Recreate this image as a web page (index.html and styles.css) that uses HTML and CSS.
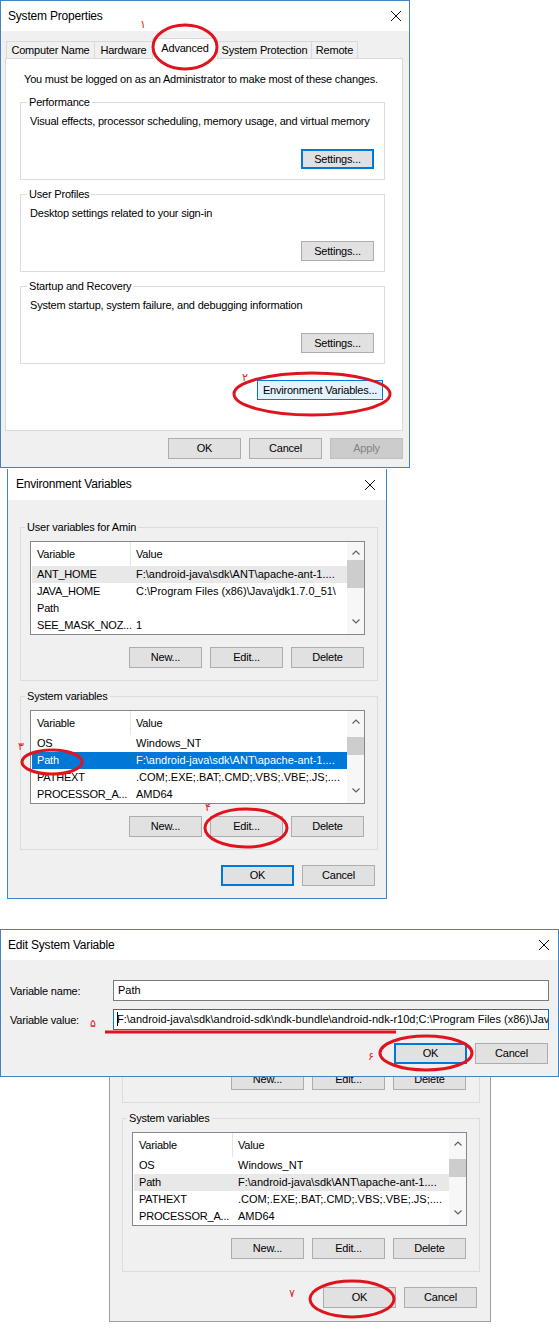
FILE: index.html
```html
<!DOCTYPE html>
<html>
<head>
<meta charset="utf-8">
<title>Environment Variables steps</title>
<link rel="stylesheet" href="styles.css">
</head>
<body>
<main class="desk">

  <!-- Window 1: System Properties -->
  <section class="win sysprops">
    <header class="titlebar tb-sp">
      <span class="title">System Properties</span>
      <svg class="close" viewBox="0 0 12 12"><path d="M1 1L11 11M11 1L1 11"/></svg>
    </header>
    <div class="sp-body">
      <nav class="tabs">
        <span class="tab t-cn">Computer Name</span>
        <span class="tab t-hw">Hardware</span>
        <span class="tab t-adv active">Advanced</span>
        <span class="tab t-sp">System Protection</span>
        <span class="tab t-rm">Remote</span>
      </nav>
      <div class="panel">
        <p class="notice">You must be logged on as an Administrator to make most of these changes.</p>
        <div class="group sp-group first">
          <span class="gtitle">Performance</span>
          <p class="gtext">Visual effects, processor scheduling, memory usage, and virtual memory</p>
          <div class="grp-btns"><button class="btn focus">Settings...</button></div>
        </div>
        <div class="group sp-group">
          <span class="gtitle">User Profiles</span>
          <p class="gtext">Desktop settings related to your sign-in</p>
          <div class="grp-btns"><button class="btn">Settings...</button></div>
        </div>
        <div class="group sp-group">
          <span class="gtitle">Startup and Recovery</span>
          <p class="gtext">System startup, system failure, and debugging information</p>
          <div class="grp-btns"><button class="btn">Settings...</button></div>
        </div>
        <div class="env-row"><button class="btn hover wide">Environment Variables...</button></div>
      </div>
      <div class="sp-foot">
        <button class="btn tall">OK</button>
        <button class="btn tall">Cancel</button>
        <button class="btn tall disabled">Apply</button>
      </div>
    </div>
  </section>

  <!-- Window 2: Environment Variables -->
  <section class="win envvars ev-a">
    <header class="titlebar tb-ev">
      <span class="title">Environment Variables</span>
      <svg class="close" viewBox="0 0 12 12"><path d="M1 1L11 11M11 1L1 11"/></svg>
    </header>
    <div class="ev-body">
      <div class="group ev-group">
        <span class="gtitle">User variables for Amin</span>
        <div class="list">
          <div class="list-main">
            <div class="lhead"><span class="c1">Variable</span><span class="c2">Value</span></div>
            <div class="row sel-gray"><span class="c1">ANT_HOME</span><span class="c2">F:\android-java\sdk\ANT\apache-ant-1....</span></div>
            <div class="row"><span class="c1">JAVA_HOME</span><span class="c2">C:\Program Files (x86)\Java\jdk1.7.0_51\</span></div>
            <div class="row"><span class="c1">Path</span><span class="c2"></span></div>
            <div class="row"><span class="c1">SEE_MASK_NOZ...</span><span class="c2">1</span></div>
          </div>
          <div class="vscroll">
            <div class="arrow up"><svg viewBox="0 0 8 5"><path d="M0.5 4.5L4 1L7.5 4.5"/></svg></div>
            <div class="track"><div class="thumb thumb-user"></div></div>
            <div class="arrow down"><svg viewBox="0 0 8 5"><path d="M0.5 0.5L4 4L7.5 0.5"/></svg></div>
          </div>
        </div>
        <div class="list-btns"><button class="btn tall">New...</button><button class="btn tall">Edit...</button><button class="btn tall">Delete</button></div>
      </div>
      <div class="group ev-group second">
        <span class="gtitle">System variables</span>
        <div class="list">
          <div class="list-main">
            <div class="lhead"><span class="c1">Variable</span><span class="c2">Value</span></div>
            <div class="row"><span class="c1">OS</span><span class="c2">Windows_NT</span></div>
            <div class="row sel-blue"><span class="c1">Path</span><span class="c2">F:\android-java\sdk\ANT\apache-ant-1....</span></div>
            <div class="row"><span class="c1">PATHEXT</span><span class="c2">.COM;.EXE;.BAT;.CMD;.VBS;.VBE;.JS;....</span></div>
            <div class="row"><span class="c1">PROCESSOR_A...</span><span class="c2">AMD64</span></div>
          </div>
          <div class="vscroll">
            <div class="arrow up"><svg viewBox="0 0 8 5"><path d="M0.5 4.5L4 1L7.5 4.5"/></svg></div>
            <div class="track"><div class="thumb thumb-sys"></div></div>
            <div class="arrow down"><svg viewBox="0 0 8 5"><path d="M0.5 0.5L4 4L7.5 0.5"/></svg></div>
          </div>
        </div>
        <div class="list-btns"><button class="btn tall">New...</button><button class="btn tall">Edit...</button><button class="btn tall">Delete</button></div>
      </div>
      <div class="ev-foot"><button class="btn tall focus">OK</button><button class="btn tall">Cancel</button></div>
    </div>
  </section>

  <!-- Window 4: lower part of Environment Variables, behind the edit dialog -->
  <div class="clip">
    <section class="win envvars ev-b">
      <div class="ev-body">
        <div class="group ev-group cut">
          <div class="list-btns"><button class="btn tall">New...</button><button class="btn tall">Edit...</button><button class="btn tall">Delete</button></div>
        </div>
        <div class="group ev-group second">
          <span class="gtitle">System variables</span>
          <div class="list">
            <div class="list-main">
              <div class="lhead"><span class="c1">Variable</span><span class="c2">Value</span></div>
              <div class="row"><span class="c1">OS</span><span class="c2">Windows_NT</span></div>
              <div class="row sel-gray"><span class="c1">Path</span><span class="c2">F:\android-java\sdk\ANT\apache-ant-1....</span></div>
              <div class="row"><span class="c1">PATHEXT</span><span class="c2">.COM;.EXE;.BAT;.CMD;.VBS;.VBE;.JS;....</span></div>
              <div class="row"><span class="c1">PROCESSOR_A...</span><span class="c2">AMD64</span></div>
            </div>
            <div class="vscroll">
              <div class="arrow up"><svg viewBox="0 0 8 5"><path d="M0.5 4.5L4 1L7.5 4.5"/></svg></div>
              <div class="track"><div class="thumb thumb-sys"></div></div>
              <div class="arrow down"><svg viewBox="0 0 8 5"><path d="M0.5 0.5L4 4L7.5 0.5"/></svg></div>
            </div>
          </div>
          <div class="list-btns"><button class="btn tall">New...</button><button class="btn tall">Edit...</button><button class="btn tall">Delete</button></div>
        </div>
        <div class="ev-foot"><button class="btn tall">OK</button><button class="btn tall">Cancel</button></div>
      </div>
    </section>
  </div>

  <!-- Window 3: Edit System Variable -->
  <section class="win editvar">
    <header class="titlebar tb-ed">
      <span class="title">Edit System Variable</span>
      <svg class="close" viewBox="0 0 12 12"><path d="M1 1L11 11M11 1L1 11"/></svg>
    </header>
    <div class="ed-body">
      <div class="field"><span class="flabel">Variable name:</span><div class="input">Path</div></div>
      <div class="field second"><span class="flabel">Variable value:</span><div class="input focus"><span class="caret"></span>F:\android-java\sdk\android-sdk\ndk-bundle\android-ndk-r10d;C:\Program Files (x86)\Java</div></div>
      <div class="ed-foot"><button class="btn tall focus">OK</button><button class="btn tall">Cancel</button></div>
    </div>
  </section>

  <!-- Red hand-drawn annotations -->
  <svg class="marks" viewBox="0 0 559 1335">
    <g class="rings">
      <ellipse cx="185" cy="47" rx="32" ry="22"/>
      <ellipse cx="312" cy="394" rx="78" ry="21"/>
      <ellipse cx="52" cy="762" rx="30" ry="12"/>
      <ellipse cx="246" cy="828" rx="41" ry="19"/>
      <ellipse cx="426" cy="1053" rx="46" ry="17"/>
      <ellipse cx="352" cy="1299" rx="42" ry="18"/>
      <line x1="105" y1="1032" x2="396" y2="1032"/>
    </g>
    <g class="nums">
      <text x="140" y="28">۱</text>
      <text x="242" y="381">۲</text>
      <text x="18" y="750">۳</text>
      <text x="205" y="811">۴</text>
      <text x="90" y="1027">۵</text>
      <text x="368" y="1060">۶</text>
      <text x="289" y="1297">۷</text>
    </g>
  </svg>

</main>
</body>
</html>
```

FILE: styles.css
```css
* { box-sizing: border-box; }

html, body {
  margin: 0;
  padding: 0;
  background: #ffffff;
}

body {
  font-family: "Liberation Sans", Arial, sans-serif;
  font-size: 11px;
  letter-spacing: -0.2px;
  color: #000;
}

.desk {
  position: relative;
  width: 559px;
  height: 1335px;
  overflow: hidden;
  background: #fff;
}

/* ---------- windows ---------- */
.win {
  position: absolute;
  background: #f0f0f0;
  border: 1px solid #3f84c6;
}

.titlebar {
  display: flex;
  align-items: center;
  justify-content: space-between;
  background: #fff;
}

.title {
  line-height: 15px;
  font-size: 12px;
}

.close {
  width: 12px;
  height: 12px;
}
.close path {
  stroke: #111;
  stroke-width: 1;
  fill: none;
}

/* ---------- buttons ---------- */
.btn {
  font: inherit;
  letter-spacing: inherit;
  color: #000;
  width: 73px;
  height: 20px;
  padding: 0;
  margin: 0;
  background: #e1e1e1;
  border: 1px solid #adadad;
  text-align: center;
  line-height: 17px;
  white-space: nowrap;
}
.btn.tall { height: 21px; }
.btn.focus {
  border-color: #0078d7;
  box-shadow: inset 0 0 0 1px #0078d7;
}
.btn.hover {
  background: #e5f1fb;
  border-color: #0078d7;
}
.btn.wide { width: 126px; }
.btn.disabled {
  background: #cccccc;
  border-color: #bfbfbf;
  color: #838383;
}

/* ---------- group boxes ---------- */
.group {
  border: 1px solid #dcdcdc;
}
.gtitle {
  display: table;
  line-height: 15px;
  padding: 0 2px;
  margin-top: -8px;
}

/* ---------- System Properties ---------- */
.sysprops {
  left: 0;
  top: 0;
  width: 410px;
  height: 468px;
}
.tb-sp {
  height: 30px;
  padding: 0 7px 0 7px;
}
.sp-body {
  padding: 0 6px 0 4px;
}
.tabs {
  display: flex;
  align-items: flex-end;
  height: 27px;
  padding-left: 1px;
}
.tab {
  height: 17px;
  line-height: 16px;
  text-align: center;
  white-space: nowrap;
  background: #f0f0f0;
  border: 1px solid #d9d9d9;
  border-bottom: none;
  margin-left: -1px;
}
.tab:first-child { margin-left: 0; }
.tab.active {
  position: relative;
  z-index: 1;
  height: 21px;
  line-height: 19px;
  margin-bottom: -1px;
  background: #fff;
}
.t-cn { width: 89px; }
.t-hw { width: 59px; }
.t-adv { width: 66px; }
.t-sp { width: 95px; }
.t-rm { width: 47px; }

.panel {
  background: #fff;
  border: 1px solid #d9d9d9;
  height: 373px;
  padding: 13px 17px 0 14px;
}
.notice {
  margin: 0 0 0 4px;
  line-height: 15px;
  white-space: nowrap;
}
.sp-group {
  margin-top: 14px;
  padding: 0 10px 10px 9px;
}
.sp-group.first { margin-top: 15px; }
.sp-group .gtitle {
  background: #fff;
  margin-left: -3px;
}
.gtext {
  margin: 4px 0 0;
  line-height: 15px;
  white-space: nowrap;
}
.grp-btns {
  display: flex;
  justify-content: flex-end;
  margin-top: 20px;
}
.env-row {
  display: flex;
  justify-content: flex-end;
  margin: 16px 2px 0 0;
}
.sp-foot {
  display: flex;
  justify-content: flex-end;
  gap: 8px;
  margin-top: 7px;
}

/* ---------- Environment Variables ---------- */
.envvars {
  height: 430px;
  border-top: none;
}
.ev-a {
  left: 7px;
  top: 469px;
  width: 380px;
}
.tb-ev {
  height: 31px;
  padding: 0 10px 0 8px;
}
.ev-body {
  padding: 27px 8px 0 12px;
}
.ev-group {
  padding: 0 12px 12px 9px;
}
.ev-group.second { margin-top: 15px; }
.ev-group .gtitle {
  background: #f0f0f0;
  margin-left: -5px;
}

.list {
  display: flex;
  height: 94px;
  margin-top: 6px;
  background: #fff;
  border: 1px solid #828790;
  overflow: hidden;
}
.list-main {
  flex: 1;
  min-width: 0;
}
.lhead {
  display: flex;
  height: 24px;
  align-items: center;
}
.lhead .c1 {
  width: 100px;
  height: 24px;
  line-height: 24px;
  padding-left: 6px;
  border-right: 1px solid #e5e5e5;
}
.lhead .c2 {
  padding-left: 5px;
}
.row {
  display: flex;
  height: 17px;
  line-height: 17px;
  margin-left: 1px;
  white-space: nowrap;
}
.row .c1 {
  width: 99px;
  flex: none;
  padding-left: 5px;
}
.row .c2 {
  padding-left: 5px;
  overflow: hidden;
  letter-spacing: 0;
}
.row.sel-gray { background: #e8e8e8; }
.row.sel-blue {
  background: #0078d7;
  color: #fff;
}

.vscroll {
  width: 17px;
  flex: none;
  display: flex;
  flex-direction: column;
  background: #f7f7f7;
}
.arrow {
  height: 17px;
  display: flex;
  justify-content: center;
  flex: none;
}
.arrow.up { align-items: flex-end; padding-bottom: 4px; }
.arrow.down { align-items: flex-start; padding-top: 2px; }
.arrow svg {
  width: 8px;
  height: 5px;
}
.arrow path {
  fill: none;
  stroke: #606060;
  stroke-width: 1.2;
}
.track { flex: 1; }
.thumb {
  background: #cdcdcd;
}
.thumb-user { margin-top: 1px; height: 28px; }
.thumb-sys { margin-top: 9px; height: 18px; }

.list-btns {
  display: flex;
  justify-content: flex-end;
  gap: 8px;
  margin-top: 12px;
  padding-right: 1px;
}
.ev-foot {
  display: flex;
  justify-content: flex-end;
  gap: 8px;
  margin: 15px 3px 0 0;
}

/* lower part of the second copy, behind the edit dialog */
.clip {
  position: absolute;
  left: 109px;
  top: 1077px;
  width: 384px;
  height: 246px;
  overflow: hidden;
}
.ev-b {
  left: 0;
  top: -9px;
  width: 382px;
  height: 254px;
  border-color: #a0a0a0;
}
.ev-b .ev-body { padding: 0 10px 0 12px; }
.ev-group.cut { border-top: none; }
.ev-group.cut .list-btns { margin-top: 1px; }

/* ---------- Edit System Variable ---------- */
.editvar {
  left: 0;
  top: 929px;
  width: 559px;
  height: 148px;
  z-index: 2;
}
.tb-ed {
  height: 30px;
  padding: 0 8px 0 7px;
}
.ed-body {
  padding: 20px 9px 0 9px;
}
.field {
  display: flex;
  align-items: center;
  height: 21px;
}
.field.second { margin-top: 8px; }
.flabel {
  width: 103px;
  flex: none;
  white-space: nowrap;
}
.input {
  flex: 1;
  height: 21px;
  line-height: 19px;
  background: #fff;
  border: 1px solid #7a7a7a;
  padding-left: 4px;
  white-space: nowrap;
  overflow: hidden;
  letter-spacing: 0;
}
.input.focus {
  border-color: #0078d7;
  padding-left: 3px;
}
.caret {
  display: inline-block;
  width: 1px;
  height: 14px;
  background: #000;
  vertical-align: -3px;
  margin-right: -1px;
}
.ed-foot {
  display: flex;
  justify-content: flex-end;
  gap: 8px;
  margin: 13px 1px 0 0;
}

/* ---------- red annotations ---------- */
.marks {
  position: absolute;
  left: 0;
  top: 0;
  width: 559px;
  height: 1335px;
  z-index: 5;
  pointer-events: none;
}
.rings ellipse,
.rings line {
  fill: none;
  stroke: #e0141e;
  stroke-width: 3;
}
.nums text {
  font-family: "DejaVu Sans", sans-serif;
  font-size: 11px;
  fill: #d9232b;
}
```
